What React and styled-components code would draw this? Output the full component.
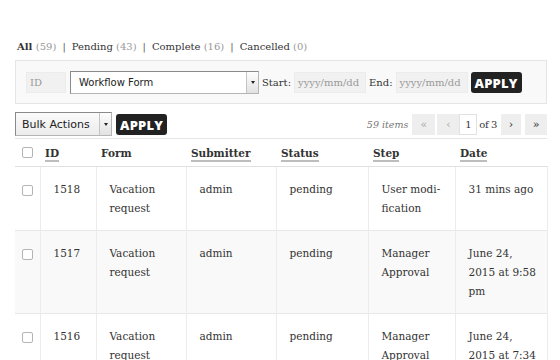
import React from "react";
import styled, { createGlobalStyle } from "styled-components";

const GlobalStyle = createGlobalStyle`
  body {
    margin: 0;
    background: #ffffff;
    font-family: "DejaVu Serif", "Liberation Serif", serif;
    color: #333;
  }
`;

const Page = styled.div`
  width: 532px;
  padding: 39px 0 0 15px;
`;

const StatusLinks = styled.ul`
  list-style: none;
  margin: 0 0 5px 2px;
  padding: 0;
  display: flex;
  font-size: 10px;
  line-height: 16px;
  color: #333;
`;

const StatusItem = styled.li`
  font-weight: ${(p) => (p.$current ? 700 : 400)};
  &:not(:first-child)::before {
    content: "|";
    color: #555;
    font-weight: 400;
    margin: 0 6px;
  }
`;

const Count = styled.span`
  color: #999;
  font-weight: 400;
`;

const FilterBox = styled.div`
  display: flex;
  align-items: center;
  gap: 3px;
  height: 44px;
  padding: 0 10px;
  background: #f9f9f9;
  border: 1px solid #e5e5e5;
  box-sizing: border-box;
  font-size: 10px;
`;

const TextField = styled.div`
  width: ${(p) => p.$w}px;
  height: 21px;
  box-sizing: border-box;
  padding: 0 3px;
  display: flex;
  align-items: center;
  background: #f1f1f1;
  border: 1px solid #ececec;
  color: #999;
  font-size: 10px;
  margin-right: ${(p) => p.$mr || 0}px;
`;

const SelectBox = styled.div`
  width: ${(p) => p.$w}px;
  height: ${(p) => p.$h}px;
  box-sizing: border-box;
  display: flex;
  align-items: center;
  justify-content: space-between;
  background: ${(p) => p.$bg};
  border: 1px solid #b5b5b5;
  border-top-color: #8a8a8a;
  border-left-color: #8a8a8a;
  font-family: "DejaVu Sans", "Verdana", sans-serif;
  font-size: ${(p) => p.$fs}px;
  color: #222;
  padding-left: ${(p) => p.$pl}px;
`;

const Arrow = styled.span`
  width: 11px;
  align-self: stretch;
  display: flex;
  align-items: center;
  justify-content: center;
  background: linear-gradient(#fdfdfd, #e2e2e2);
  border-left: 1px solid #c4c4c4;
  &::after {
    content: "";
    border-left: 2px solid transparent;
    border-right: 2px solid transparent;
    border-top: 3px solid #222;
  }
`;

const Label = styled.span`
  color: #333;
  font-size: 10px;
`;

const ApplyButton = styled.button`
  height: 21px;
  padding: 2px 4px 0;
  border: none;
  border-radius: 3px;
  background: #222;
  color: #fff;
  font-family: "Open Sans", "DejaVu Sans", sans-serif;
  font-weight: 800;
  font-size: 13px;
  letter-spacing: 0.2px;
  line-height: 19px;
  cursor: pointer;
`;

const Toolbar = styled.div`
  display: flex;
  align-items: center;
  justify-content: space-between;
  margin-top: 6px;
  height: 28px;
`;

const Group = styled.div`
  display: flex;
  align-items: center;
  gap: ${(p) => p.$gap}px;
`;

const Items = styled.span`
  font-style: italic;
  color: #777;
  font-size: 9.5px;
  margin-right: 4px;
`;

const PageButton = styled.span`
  width: ${(p) => p.$w}px;
  height: 21px;
  display: flex;
  align-items: center;
  justify-content: center;
  background: #eeeeee;
  color: ${(p) => (p.$disabled ? "#aaa" : "#333")};
  font-size: 11px;
  margin-left: ${(p) => p.$ml || 0}px;
`;

const PageInput = styled.span`
  width: 18px;
  height: 21px;
  box-sizing: border-box;
  display: flex;
  align-items: center;
  justify-content: center;
  background: #fff;
  border: 1px solid #e2e2e2;
  font-size: 10px;
  color: #333;
`;

const OfText = styled.span`
  font-size: 10px;
  color: #333;
  margin-left: 2px;
  letter-spacing: -0.4px;
`;

const Table = styled.table`
  width: 532px;
  border-collapse: collapse;
  table-layout: fixed;
  border-top: 1px solid #e5e5e5;
  font-size: 10.5px;
`;

const HeadCell = styled.th`
  height: 27px;
  padding: 0 5px;
  text-align: left;
  font-weight: 700;
  font-size: 10.5px;
  color: #333;
  border-bottom: 1px solid #e1e1e1;
  &:first-child {
    padding-left: 7px;
  }
`;

const Sortable = styled.span`
  border-bottom: 2px solid #bdbdbd;
  padding-bottom: 1px;
`;

const Row = styled.tr`
  background: ${(p) => (p.$alt ? "#f9f9f9" : "#fff")};
  border-bottom: 1px solid #e8e8e8;
`;

const Cell = styled.td`
  vertical-align: top;
  padding: 13px 10px 12px 13px;
  line-height: 19px;
  color: #333;
  border-left: 1px solid #ececec;
  border-right: 1px solid #ececec;
  &:first-child {
    border-left: none;
    padding: 13px 0 0 7px;
  }
`;

const Check = styled.span`
  display: inline-block;
  width: 9px;
  height: 9px;
  border: 1px solid #b4b4b4;
  border-radius: 2px;
  background: #fff;
  margin-top: ${(p) => p.$mt}px;
`;

const columns = [
  { key: "cb", w: 25 },
  { key: "ID", w: 56, sort: true },
  { key: "Form", w: 90 },
  { key: "Submitter", w: 90, sort: true },
  { key: "Status", w: 92, sort: true },
  { key: "Step", w: 87, sort: true },
  { key: "Date", w: 92, sort: true },
];

const rows = [
  { id: 1518, form: "Vacation request", sub: "admin", status: "pending", step: ["User modi-", "fication"], date: "31 mins ago" },
  { id: 1517, form: "Vacation request", sub: "admin", status: "pending", step: ["Manager Approval"], date: "June 24, 2015 at 9:58 pm" },
  { id: 1516, form: "Vacation request", sub: "admin", status: "pending", step: ["Manager Approval"], date: "June 24, 2015 at 7:34 pm" },
];

export default function App() {
  return (
    <>
      <GlobalStyle />
      <Page>
        <StatusLinks>
          <StatusItem $current>All <Count>(59)</Count></StatusItem>
          <StatusItem>Pending <Count>(43)</Count></StatusItem>
          <StatusItem>Complete <Count>(16)</Count></StatusItem>
          <StatusItem>Cancelled <Count>(0)</Count></StatusItem>
        </StatusLinks>

        <FilterBox>
          <TextField $w={40} $mr={1}>ID</TextField>
          <SelectBox $w={189} $h={23} $bg="#fff" $fs={10} $pl={8}>
            Workflow Form
            <Arrow />
          </SelectBox>
          <Label>Start:</Label>
          <TextField $w={72}>yyyy/mm/dd</TextField>
          <Label>End:</Label>
          <TextField $w={72}>yyyy/mm/dd</TextField>
          <ApplyButton>APPLY</ApplyButton>
        </FilterBox>

        <Toolbar>
          <Group $gap={4}>
            <SelectBox $w={97} $h={24} $bg="linear-gradient(#fafafa,#ececec)" $fs={11} $pl={6}>
              Bulk Actions
              <Arrow />
            </SelectBox>
            <ApplyButton>APPLY</ApplyButton>
          </Group>
          <Group $gap={0}>
            <Items>59 items</Items>
            <PageButton $w={23} $disabled>«</PageButton>
            <PageButton $w={22} $ml={2} $disabled>‹</PageButton>
            <PageInput>1</PageInput>
            <OfText>of 3</OfText>
            <PageButton $w={20} $ml={4}>›</PageButton>
            <PageButton $w={22} $ml={4}>»</PageButton>
          </Group>
        </Toolbar>

        <Table>
          <colgroup>
            {columns.map((c) => (
              <col key={c.key} style={{ width: c.w }} />
            ))}
          </colgroup>
          <thead>
            <tr>
              {columns.map((c) => (
                <HeadCell key={c.key}>
                  {c.key === "cb" ? (
                    <Check $mt={2} />
                  ) : c.sort ? (
                    <Sortable>{c.key}</Sortable>
                  ) : (
                    c.key
                  )}
                </HeadCell>
              ))}
            </tr>
          </thead>
          <tbody>
            {rows.map((r, i) => (
              <Row key={r.id} $alt={i % 2 === 1}>
                <Cell>
                  <Check $mt={5} />
                </Cell>
                <Cell>{r.id}</Cell>
                <Cell>{r.form}</Cell>
                <Cell>{r.sub}</Cell>
                <Cell>{r.status}</Cell>
                <Cell>
                  {r.step.map((s, k) => (
                    <React.Fragment key={k}>
                      {k > 0 && <br />}
                      {s}
                    </React.Fragment>
                  ))}
                </Cell>
                <Cell>{r.date}</Cell>
              </Row>
            ))}
          </tbody>
        </Table>
      </Page>
    </>
  );
}
